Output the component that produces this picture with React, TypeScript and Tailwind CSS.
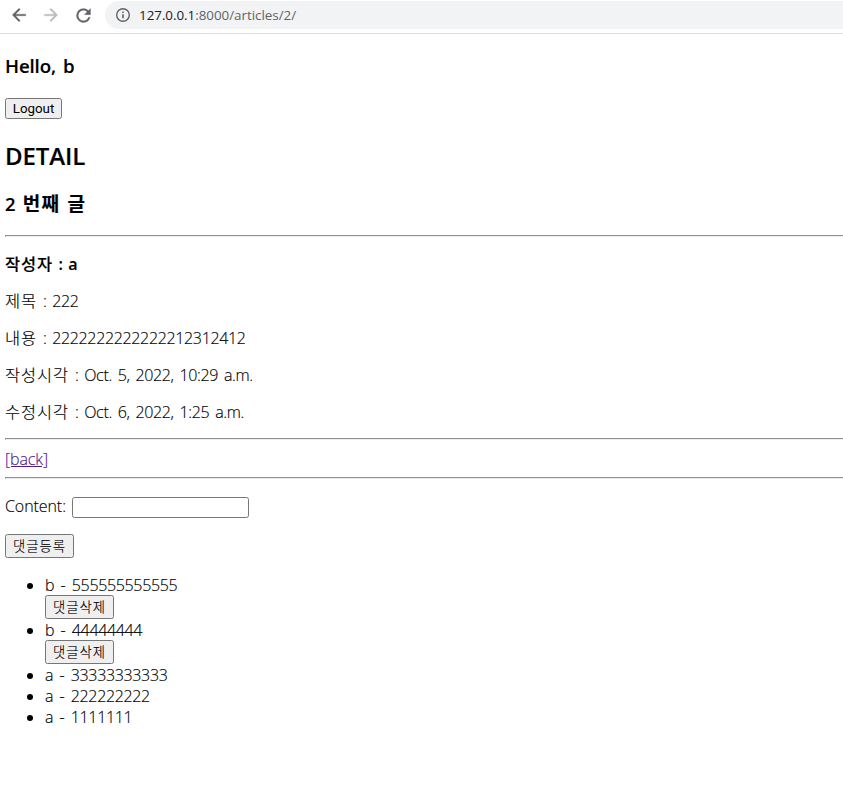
import type { ReactNode } from 'react';

const Rule = () => <hr className="h-[2px] border-0 border-t border-l border-[#909090] border-b border-b-[#ececec]" />;

const Button = ({ children, className }: { children: ReactNode; className: string }) => (
  <button
    className={`flex items-center justify-center whitespace-nowrap rounded-[2.5px] border border-[#767676] bg-[#efefef] ${className}`}
  >
    {children}
  </button>
);

const Ko = ({ children, className = 'text-[16.4px] font-light tracking-[0.95px]' }: { children: ReactNode; className?: string }) => (
  <span className={`font-['Noto_Sans_CJK_KR',sans-serif] leading-none ${className}`}>{children}</span>
);

const Comment = ({ text, removable }: { text: string; removable?: boolean }) => (
  <li className={removable ? 'h-[45px]' : 'h-[21px]'}>
    <div className="flex h-[21px] items-center pt-[2px]">
      <span className="mr-3 ml-[22px] h-[6px] w-[6px] rounded-full bg-black" />
      <span className="[word-spacing:2.6px]">{text}</span>
    </div>
    {removable && (
      <Button className="ml-10 h-6 w-[69px]">
        <Ko className="text-[13.33px] font-light tracking-[1px]">댓글삭제</Ko>
      </Button>
    )}
  </li>
);

export default function App() {
  return (
    <div className="h-[807px] w-full overflow-hidden bg-white font-['Open_Sans','Noto_Sans_CJK_KR',sans-serif] text-[16px] leading-[21px] font-light tracking-[-0.34px] text-black">
      <header className="flex h-[34px] items-start border-b border-[#dadce0]">
        <div className="flex h-[30px] items-center pl-[9px] text-[#5f6368]">
          <svg width="20" height="20" viewBox="0 0 24 24" fill="currentColor" stroke="currentColor" strokeWidth="0.4">
            <path d="M20 11H7.83l5.59-5.59L12 4l-8 8 8 8 1.41-1.41L7.83 13H20v-2z" />
          </svg>
          <svg className="ml-3 text-[#babcbe]" width="20" height="20" viewBox="0 0 24 24" fill="currentColor" stroke="currentColor" strokeWidth="0.4">
            <path d="M12 4l-1.41 1.41L16.17 11H4v2h12.17l-5.58 5.59L12 20l8-8z" />
          </svg>
          <svg className="ml-3" width="21" height="21" viewBox="0 0 24 24" fill="currentColor" stroke="currentColor" strokeWidth="0.3">
            <path d="M17.65 6.35A7.958 7.958 0 0 0 12 4a8 8 0 1 0 7.73 10h-2.08A5.99 5.99 0 0 1 12 18a6 6 0 1 1 0-12c1.66 0 3.14.69 4.22 1.78L13 11h7V4l-2.35 2.35z" />
          </svg>
        </div>
        <div className="ml-[11px] mt-px flex h-7 flex-1 items-center rounded-l-full bg-[#f1f3f4] pl-[10px] text-[#5f6368]">
          <svg width="16" height="16" viewBox="0 0 16 16" fill="none" stroke="currentColor" strokeWidth="1.4">
            <circle cx="8" cy="8" r="6.3" />
            <path d="M8 7.2v4.1M8 4.6v1.5" strokeWidth="1.6" />
          </svg>
          <span className="ml-2 text-[13.4px] font-normal tracking-[-0.03px]">
            <span className="text-[#202124]">127.0.0.1</span>:8000/articles/2/
          </span>
        </div>
      </header>

      <main className="pl-[5px] [-webkit-text-stroke:0.15px]">
        <h3 className="mt-[19px] h-[26px] text-[18.7px] leading-[26px] font-semibold tracking-[-0.15px] [word-spacing:2.5px]">Hello, b</h3>
        <Button className="mt-[19px] h-[21px] w-[57px] font-['Roboto',sans-serif] text-[13.33px] font-normal tracking-normal [-webkit-text-stroke:0]">
          Logout
        </Button>
        <h2 className="mt-[21px] h-8 text-[24px] leading-8 font-semibold tracking-[-0.1px]">DETAIL</h2>
        <h3 className="mt-[19px] h-[25px] text-[18.4px] leading-[25px] font-semibold tracking-normal [word-spacing:2.4px]">
          2 <Ko className="text-[19px] font-semibold tracking-[1.2px] [word-spacing:1.8px]">번째 글</Ko>
        </h3>
        <div className="mt-[19px]"><Rule /></div>
        <p className="mt-[17px] h-[21px] font-semibold [word-spacing:1.7px]">
          <Ko className="text-[16.4px] font-medium tracking-[0.95px]">작성자</Ko> : a
        </p>
        <div className="[word-spacing:2px]">
          <p className="mt-4 h-[21px]"><Ko>제목</Ko> : 222</p>
          <p className="mt-4 h-[21px]"><Ko>내용</Ko> : 2222222222222212312412</p>
          <p className="mt-4 h-[21px]"><Ko>작성시각</Ko> : Oct. 5, 2022, 10:29 a.m.</p>
          <p className="mt-4 h-[21px]"><Ko>수정시각</Ko> : Oct. 6, 2022, 1:25 a.m.</p>
        </div>
        <div className="mt-[15px]"><Rule /></div>
        <p className="mt-[9px] h-[21px] tracking-[-0.1px] text-[#551a8b]">
          <a className="underline">[back]</a>
        </p>
        <div className="mt-[7px]"><Rule /></div>
        <div className="mt-[18px] flex h-[21px] items-center">
          <label className="-mt-[2px] w-[67px] tracking-[-0.08px]">Content:</label>
          <input className="h-[21px] w-[177px] rounded-[2.5px] border border-[#767676] bg-white" />
        </div>
        <Button className="mt-4 h-6 w-[69px]">
          <Ko className="text-[13.33px] font-light tracking-[1px]">댓글등록</Ko>
        </Button>
        <ul className="mt-4">
          <Comment text="b - 555555555555" removable />
          <Comment text="b - 44444444" removable />
          <Comment text="a - 33333333333" />
          <Comment text="a - 222222222" />
          <Comment text="a - 1111111" />
        </ul>
      </main>
    </div>
  );
}
